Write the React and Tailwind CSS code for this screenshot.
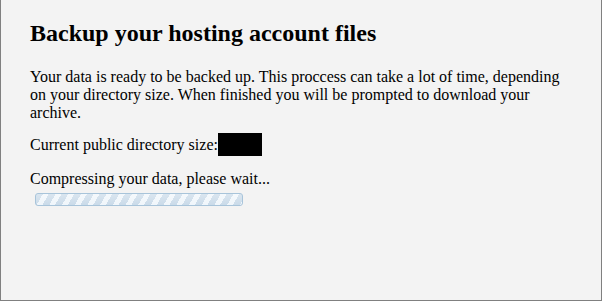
export default function App() {
  return (
    <div
      className="w-full h-[301px] bg-[#f3f3f3] border-l border-r border-b border-[#808080] px-[29px] pt-[20px] text-black"
      style={{ fontFamily: '"Liberation Serif", "Times New Roman", serif' }}
    >
      <h2 className="text-[24px] font-bold leading-[1.15]">Backup your hosting account files</h2>

      <p className="mt-[20px] text-[16px] leading-[1.15]">
        Your data is ready to be backed up. This proccess can take a lot of time, depending on your directory size.
        When finished you will be prompted to download your archive.
      </p>

      <p className="mt-[13px] text-[16px] leading-[1.15]">
        Current public directory size:<span className="bg-black px-[3px] py-[3px]"><span className="inline-block w-[38px]"></span></span>
      </p>

      <p className="mt-[16px] text-[16px] leading-[1.15]">Compressing your data, please wait...</p>

      {/* progress bar */}
      <div className="ml-[5px] mt-[4px] w-[208px] h-[13px] rounded-[3px] border border-[#a8c4da] overflow-hidden bg-[repeating-linear-gradient(120deg,#cadbe9_0px,#cadbe9_6px,#f0f6fb_6px,#f0f6fb_11px)]">
        <div className="h-full w-full bg-gradient-to-b from-white/30 to-transparent"></div>
      </div>
    </div>
  );
}
